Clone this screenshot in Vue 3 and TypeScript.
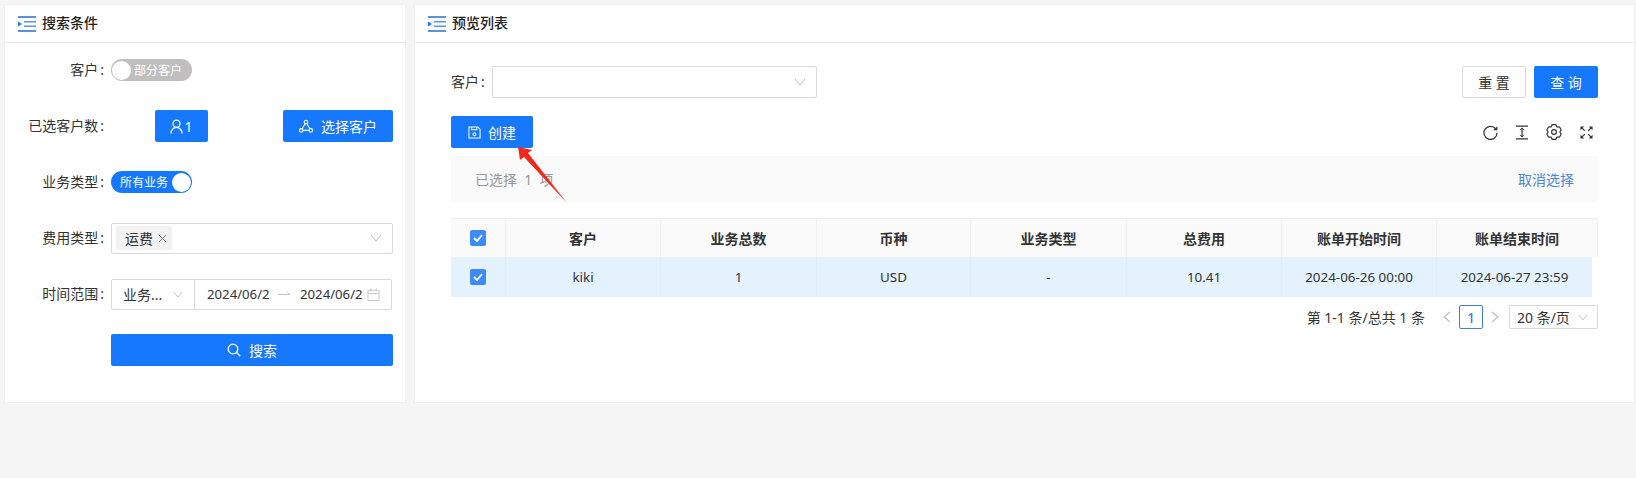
<script setup lang="ts">
interface Col { key: string; title: string; width: number; value: string }
const cols: Col[] = [
  { key: 'c', title: '客户', width: 155, value: 'kiki' },
  { key: 'n', title: '业务总数', width: 156, value: '1' },
  { key: 'm', title: '币种', width: 154, value: 'USD' },
  { key: 't', title: '业务类型', width: 156, value: '-' },
  { key: 'f', title: '总费用', width: 155, value: '10.41' },
  { key: 's', title: '账单开始时间', width: 155, value: '2024-06-26 00:00' },
  { key: 'e', title: '账单结束时间', width: 161, value: '2024-06-27 23:59' },
]
</script>

<template>
  <div class="page">
    <section class="card left">
      <header class="head">
        <svg class="head-icon" viewBox="0 0 18 16" width="18" height="16"><path d="M0 0h18v2H0zM0 14h18v2H0zM6 5h12v1.600H6zM6 9.400h12V11H6z" fill="#5a92dc"/><path d="M0 5.600 4 8 0 10.400z" fill="#1677ff"/></svg>
        <span>搜索条件</span>
      </header>
      <div class="form">
        <div class="row">
          <label>客户<b>:</b></label>
          <div class="switch off"><i class="knob"></i><span>部分客户</span></div>
        </div>
        <div class="row">
          <label>已选客户数<b>:</b></label>
          <div class="between">
            <button class="btn primary count">
              <svg viewBox="0 0 14 16" width="13" height="15" fill="none" stroke="#fff" stroke-width="1.300"><circle cx="7" cy="5" r="3.800"/><path d="M1 15.500c0-3.500 2.500-6.500 6-6.500s6 3 6 6.500"/></svg>
              <span>1</span>
            </button>
            <button class="btn primary choose">
              <svg viewBox="0 0 16 16" width="14" height="14" fill="none" stroke="#fff" stroke-width="1.200"><circle cx="8" cy="3.500" r="2"/><circle cx="2.500" cy="13" r="2"/><circle cx="13.500" cy="13" r="2"/><path d="M7 5.500 3.500 11.300M9 5.500l3.500 5.800M4.500 13h7"/></svg>
              <span>选择客户</span>
            </button>
          </div>
        </div>
        <div class="row">
          <label>业务类型<b>:</b></label>
          <div class="switch on"><span>所有业务</span><i class="knob"></i></div>
        </div>
        <div class="row">
          <label>费用类型<b>:</b></label>
          <div class="select">
            <span class="tag">运费<svg viewBox="0 0 10 10" width="9" height="9" stroke="#777" stroke-width="1.100"><path d="M1 1l8 8M9 1l-8 8"/></svg></span>
            <svg class="chev" viewBox="0 0 12 8" width="12" height="8" fill="none" stroke="#bbb" stroke-width="1"><path d="M1 1l5 6 5-6"/></svg>
          </div>
        </div>
        <div class="row">
          <label>时间范围<b>:</b></label>
          <div class="range">
            <div class="range-type">
              <span>业务...</span>
              <svg viewBox="0 0 12 8" width="10" height="7" fill="none" stroke="#bbb" stroke-width="1"><path d="M1 1l5 6 5-6"/></svg>
            </div>
            <div class="range-dates">
              <span class="date">2024/06/2</span>
              <svg class="to" viewBox="0 0 14 6" width="13" height="6" fill="none" stroke="#bbb" stroke-width="1"><path d="M0 3.500h13M10 1l3 2.500"/></svg>
              <span class="date">2024/06/2</span>
              <svg class="cal" viewBox="0 0 14 14" width="13" height="13" fill="none" stroke="#c4c4c4" stroke-width="1"><path d="M1 2.500h12v11H1zM1 6h12M4 .5v3M10 .5v3"/></svg>
            </div>
          </div>
        </div>
        <div class="row">
          <label></label>
          <button class="btn primary search">
            <svg viewBox="0 0 14 14" width="14" height="14" fill="none" stroke="#fff" stroke-width="1.300"><circle cx="6" cy="6" r="4.800"/><path d="M9.500 9.500 13.300 13.300"/></svg>
            <span>搜索</span>
          </button>
        </div>
      </div>
    </section>

    <section class="card right">
      <header class="head">
        <svg class="head-icon" viewBox="0 0 18 16" width="18" height="16"><path d="M0 0h18v2H0zM0 14h18v2H0zM6 5h12v1.600H6zM6 9.400h12V11H6z" fill="#5a92dc"/><path d="M0 5.600 4 8 0 10.400z" fill="#1677ff"/></svg>
        <span>预览列表</span>
      </header>
      <div class="content">
        <div class="filter">
          <div class="filter-field">
            <label>客户<b>:</b></label>
            <div class="select wide">
              <svg class="chev" viewBox="0 0 12 8" width="12" height="8" fill="none" stroke="#bbb" stroke-width="1"><path d="M1 1l5 6 5-6"/></svg>
            </div>
          </div>
          <div class="filter-actions">
            <button class="btn ghost wide-btn">重 置</button>
            <button class="btn primary wide-btn">查 询</button>
          </div>
        </div>

        <div class="tools">
          <button class="btn primary create">
            <svg viewBox="0 0 14 14" width="13" height="13" fill="none" stroke="#fff" stroke-width="1.100"><path d="M1 1h9.500L13 3.500V13H1zM4 1v3h5.500V1"/><circle cx="7" cy="8.800" r="1.600"/></svg>
            <span>创建</span>
          </button>
          <div class="tool-icons">
            <svg viewBox="0 0 16 16" width="15" height="15" fill="none" stroke="#333" stroke-width="1.300"><path d="M13.600 4.200A7 7 0 1 0 15 8.500"/><path d="M15.300 1.200v4.500h-4.500z" fill="#333" stroke="none"/></svg>
            <svg viewBox="0 0 13 16" width="12" height="15" fill="none" stroke="#333" stroke-width="1.300"><path d="M0 1h13M0 15h13M6.500 4v8"/><path d="M4.500 5.500l2-2.500 2 2.500M4.500 10.500l2 2.500 2-2.500" stroke-width="1"/></svg>
            <svg viewBox="0 0 16 16" width="16" height="16" fill="none" stroke="#333" stroke-width="1.200" stroke-linejoin="round"><path d="M9.810.72H6.190L5.100 2.980 2.610 2.790.79 5.930 2.200 8 .79 10.070l1.820 3.140 2.490-.19 1.090 2.260h3.620l1.090-2.260 2.490.19 1.820-3.140L13.800 8l1.410-2.070-1.820-3.140-2.490.19z"/><circle cx="8" cy="8" r="2.400"/></svg>
            <svg viewBox="0 0 14 14" width="13" height="13" fill="none" stroke="#333" stroke-width="1.300"><path d="M2 2l3.200 3.200M12 2 8.800 5.200M2 12l3.200-3.200M12 12 8.800 8.800"/><path d="M.5.500h4l-4 4zM13.500.500h-4l4 4zM.5 13.500h4l-4-4zM13.500 13.500h-4l4-4z" fill="#333" stroke="none"/></svg>
          </div>
        </div>

        <div class="alert">
          <span>已选择&nbsp;&nbsp;1&nbsp;&nbsp;项</span>
          <a>取消选择</a>
        </div>

        <div class="table">
          <div class="tr th">
            <div class="cell check"><i class="cb"><svg viewBox="0 0 10 8" width="10" height="8" fill="none" stroke="#fff" stroke-width="1.800"><path d="M1 4l3 3 5-6"/></svg></i></div>
            <div v-for="c in cols" :key="c.key" class="cell" :style="{ width: c.width + 'px' }">{{ c.title }}</div>
          </div>
          <div class="tr td">
            <div class="cell check"><i class="cb"><svg viewBox="0 0 10 8" width="10" height="8" fill="none" stroke="#fff" stroke-width="1.800"><path d="M1 4l3 3 5-6"/></svg></i></div>
            <div v-for="(c, i) in cols" :key="c.key" class="cell" :style="{ width: (i === 6 ? c.width - 6 : c.width) + 'px' }">{{ c.value }}</div>
          </div>
        </div>

        <div class="pager">
          <span class="total">第 1-1 条/总共 1 条</span>
          <svg viewBox="0 0 8 12" width="8" height="12" fill="none" stroke="#bbb" stroke-width="1.100"><path d="M7 1 1 6l6 5"/></svg>
          <span class="page-no">1</span>
          <svg viewBox="0 0 8 12" width="8" height="12" fill="none" stroke="#bbb" stroke-width="1.100"><path d="M1 1l6 5-6 5"/></svg>
          <div class="size"><span>20 条/页</span><svg viewBox="0 0 12 8" width="10" height="7" fill="none" stroke="#bbb" stroke-width="1"><path d="M1 1l5 6 5-6"/></svg></div>
        </div>
      </div>

      <svg class="arrow" viewBox="0 0 50 57" width="50" height="57"><path d="M0 0 14 3 10 6 49 56 6 10 2 13z" fill="#f5261c"/></svg>
    </section>
  </div>
</template>

<style>
html, body { margin: 0; background: #f5f5f5; }
</style>

<style scoped>
.page {
  width: 1636px;
  height: 478px;
  box-sizing: border-box;
  padding: 5px 2px 0 5px;
  display: flex;
  align-items: flex-start;
  gap: 10px;
  background: #f5f5f5;
  font-family: "Noto Sans", "Noto Sans CJK SC", sans-serif;
  font-size: 14px;
  color: #333;
}
.card { background: #fff; height: 397px; position: relative; box-shadow: 0 0 0 1px #f0f0f0; }
.left { width: 400px; flex: none; }
.right { flex: 1; }
.head {
  height: 37px;
  border-bottom: 1px solid #ececec;
  display: flex;
  align-items: center;
  gap: 6px;
  padding-left: 13px;
  font-size: 14px;
  font-weight: 500;
  color: #222;
  line-height: 20px;
}
.head span { position: relative; top: -1px; }
.head-icon { flex: none; }
.form { padding-right: 12px; margin-top: -1px; }
.row { height: 56px; display: flex; align-items: center; }
label { line-height: 20px; }
label b { font-weight: 400; margin-left: 2px; }
.row > label { width: 106px; flex: none; box-sizing: border-box; padding-right: 7px; text-align: right; white-space: nowrap; }
.switch {
  width: 81px;
  height: 22px;
  border-radius: 11px;
  display: flex;
  align-items: center;
  box-sizing: border-box;
  color: #fff;
  font-size: 12px;
  padding: 0 1px;
  gap: 3px;
}
.switch.off { background: #bfbfbf; }
.switch.on { background: #1677ff; justify-content: space-between; padding-left: 9px; }
.knob { width: 19px; height: 19px; border-radius: 50%; background: #fff; flex: none; }
.between { flex: 1; display: flex; justify-content: space-between; padding-left: 44px; }
.btn {
  height: 32px;
  border: 0;
  border-radius: 2px;
  display: inline-flex;
  align-items: center;
  justify-content: center;
  font: inherit;
  padding: 0;
}
.primary { background: #1677ff; color: #fff; }
.ghost { background: #fff; border: 1px solid #d9d9d9; color: #333; box-sizing: border-box; }
.count { width: 53px; gap: 1px; }
.choose { width: 110px; gap: 8px; }
.search { flex: 1; gap: 8px; }
.select {
  flex: 1;
  height: 31px;
  box-sizing: border-box;
  border: 1px solid #d9d9d9;
  border-radius: 2px;
  display: flex;
  align-items: center;
  justify-content: space-between;
  padding: 0 10px 0 4px;
}
.tag {
  height: 24px;
  width: 56px;
  box-sizing: border-box;
  background: #f2f2f2;
  border-radius: 2px;
  display: flex;
  align-items: center;
  padding-left: 9px;
  gap: 5px;
}
.chev { margin-left: auto; }
.range {
  flex: 1;
  margin-right: 1px;
  height: 31px;
  box-sizing: border-box;
  border: 1px solid #d9d9d9;
  border-radius: 2px;
  display: flex;
  align-items: center;
}
.range-type {
  width: 83px;
  height: 100%;
  flex: none;
  box-sizing: border-box;
  border-right: 1px solid #d9d9d9;
  display: flex;
  align-items: center;
  justify-content: space-between;
  padding: 0 11px;
}
.range-dates { flex: 1; display: flex; align-items: center; padding-left: 12px; }
.date { width: 63px; white-space: nowrap; font-size: 13.2px; }
.to { margin: 0 9px 0 8px; }
.cal { margin-left: 4px; }
.content { padding: 23px 36px 0 36px; }
.filter { display: flex; justify-content: space-between; align-items: center; height: 32px; }
.filter-field { display: flex; align-items: center; }
.filter-field label { width: 41px; white-space: nowrap; }
.wide { width: 325px; flex: none; height: 32px; }
.filter-actions { display: flex; gap: 8px; }
.wide-btn { width: 64px; }
.tools { margin-top: 18px; display: flex; justify-content: space-between; align-items: center; }
.create { width: 82px; gap: 7px; }
.tool-icons { display: flex; align-items: center; gap: 18px; padding-right: 5px; }
.alert {
  margin-top: 8px;
  height: 46px;
  background: #fafafa;
  display: flex;
  align-items: center;
  justify-content: space-between;
  padding: 0 24px;
  color: #999;
}
.alert a { color: #4a85e0; }
.table { margin-top: 16px; }
.tr { display: flex; }
.th { height: 39px; background: #fafafa; border-top: 1px solid #efefef; box-sizing: border-box; font-weight: 700; color: #333; }
.td { height: 40px; width: 1141px; background: #e4f2fe; }
.cell {
  flex: none;
  display: flex;
  align-items: center;
  justify-content: center;
  box-sizing: border-box;
  border-right: 1px solid #f0f0f0;
}
.td .cell { border-right-color: #e0eefa; font-size: 13.4px; }
.td .cell:last-child { border-right: 0; }
.check { width: 55px; }
.cb {
  width: 16px;
  height: 16px;
  border-radius: 2px;
  background: #3d8bfd;
  display: flex;
  align-items: center;
  justify-content: center;
}
.pager { margin-top: 8px; height: 24px; display: flex; align-items: center; justify-content: flex-end; }
.total { margin-right: 18px; }
.page-no {
  width: 24px;
  height: 24px;
  box-sizing: border-box;
  border: 1px solid #3f7fd9;
  border-radius: 2px;
  color: #3f7fd9;
  font-weight: 500;
  display: flex;
  align-items: center;
  justify-content: center;
  margin: 0 8px;
}
.size {
  margin-left: 10px;
  width: 89px;
  height: 24px;
  box-sizing: border-box;
  border: 1px solid #d9d9d9;
  border-radius: 2px;
  display: flex;
  align-items: center;
  justify-content: space-between;
  padding: 0 9px 0 7px;
}
.arrow { position: absolute; left: 103px; top: 142px; }
</style>
